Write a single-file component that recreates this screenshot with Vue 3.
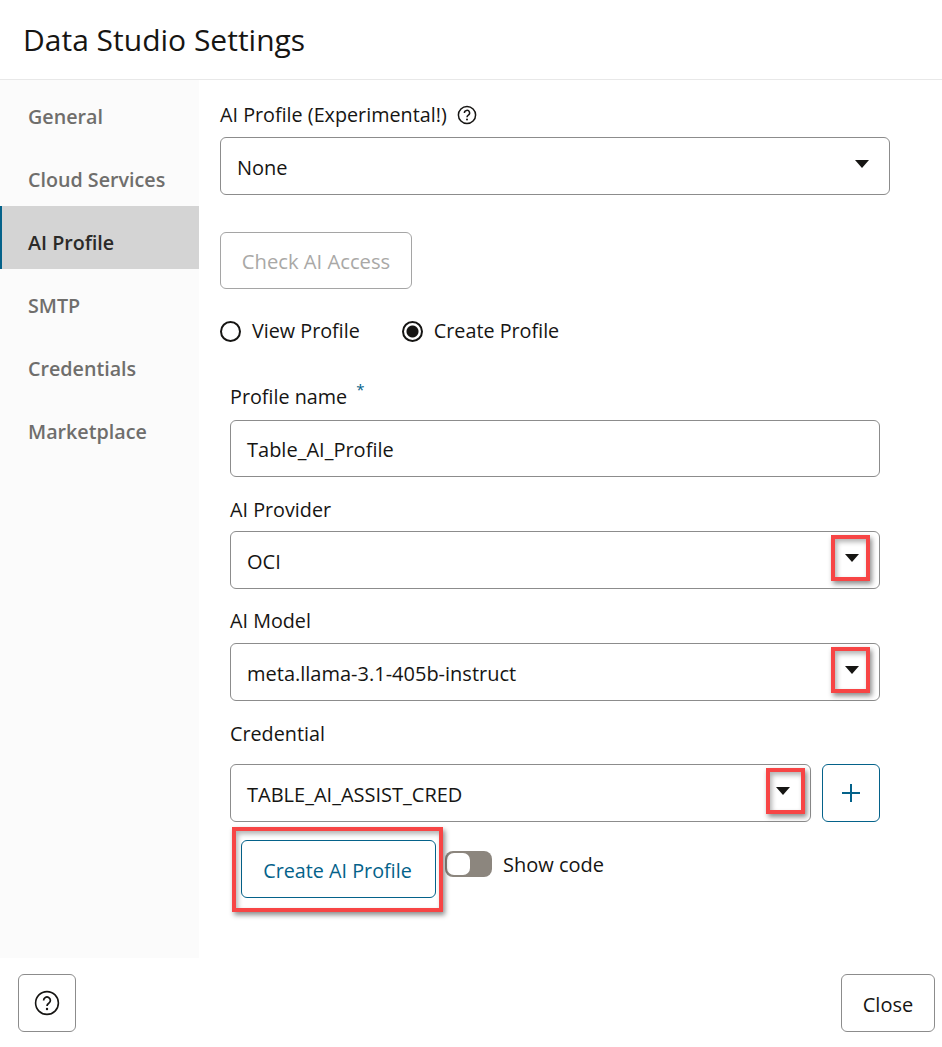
<template>
  <div class="dialog">
    <header class="dialog-header">
      <h1 class="dialog-title">Data Studio Settings</h1>
    </header>

    <div class="dialog-body">
      <nav class="side-nav">
        <div
          v-for="item in navItems"
          :key="item"
          class="nav-item"
          :class="{ active: item === 'AI Profile' }"
        >
          {{ item }}
        </div>
      </nav>

      <main class="content">
        <div class="label-row">
          <span class="field-label">AI Profile (Experimental!)</span>
          <svg class="help-small" width="20" height="20" viewBox="0 0 20 20">
            <circle cx="10" cy="10" r="8.6" fill="none" stroke="#161513" stroke-width="1.5" />
            <path d="M7.4 8a2.6 2.6 0 1 1 3.9 2.2c-.9.6-1.3 1-1.3 2" fill="none" stroke="#161513" stroke-width="1.5" />
            <circle cx="10" cy="14.6" r="1" fill="#161513" />
          </svg>
        </div>
        <div class="select wide">
          <span class="value">None</span>
          <span class="caret"></span>
        </div>

        <button class="btn check-btn" disabled>Check AI Access</button>

        <div class="radios">
          <label class="radio"><span class="radio-mark"></span>View Profile</label>
          <label class="radio"><span class="radio-mark on"></span>Create Profile</label>
        </div>

        <section class="form">
          <div class="field-label name-label">Profile name <sup class="req">*</sup></div>
          <div class="select name-input"><span class="value">Table_AI_Profile</span></div>

          <div class="field-label provider-label">AI Provider</div>
          <div class="select">
            <span class="value">OCI</span>
            <span class="caret"></span>
            <span class="mark mark-caret"></span>
          </div>

          <div class="field-label model-label">AI Model</div>
          <div class="select">
            <span class="value">meta.llama-3.1-405b-instruct</span>
            <span class="caret"></span>
            <span class="mark mark-caret"></span>
          </div>

          <div class="field-label cred-label">Credential</div>
          <div class="cred-row">
            <div class="select cred-select">
              <span class="value">TABLE_AI_ASSIST_CRED</span>
              <span class="caret"></span>
              <span class="mark mark-caret mark-cred"></span>
            </div>
            <button class="btn plus-btn" aria-label="Add">
              <svg width="18" height="18" viewBox="0 0 18 18">
                <path d="M9 0v18M0 9h18" stroke="#04628a" stroke-width="2" fill="none" />
              </svg>
            </button>
          </div>

          <div class="action-row">
            <button class="btn create-btn">
              <span class="create-text">Create AI Profile</span>
              <span class="mark mark-create"></span>
            </button>
            <span class="switch"><span class="knob"></span></span>
            <span class="switch-label">Show code</span>
          </div>
        </section>
      </main>
    </div>

    <footer class="dialog-footer">
      <button class="btn help-btn" aria-label="Help">
        <svg width="26" height="26" viewBox="0 0 26 26">
          <circle cx="13" cy="13" r="11.4" fill="none" stroke="#161513" stroke-width="1.6" />
          <path d="M9.6 10.4a3.4 3.4 0 1 1 5.2 2.9c-1.2.8-1.8 1.3-1.8 2.7" fill="none" stroke="#161513" stroke-width="1.7" />
          <circle cx="13" cy="19" r="1.2" fill="#161513" />
        </svg>
      </button>
      <button class="btn close-btn"><span class="value">Close</span></button>
    </footer>
  </div>
</template>

<script setup>
const navItems = ['General', 'Cloud Services', 'AI Profile', 'SMTP', 'Credentials', 'Marketplace']
</script>

<style>
html, body { background: #fff; }
</style>

<style scoped>
* { box-sizing: border-box; margin: 0; padding: 0; }

.dialog {
  width: 942px;
  height: 1047px;
  display: flex;
  flex-direction: column;
  background: #fff;
  color: #161513;
  font-family: "Open Sans", "Noto Sans", sans-serif;
  font-size: 19.75px;
  overflow: hidden;
}

.dialog-header {
  height: 80px;
  padding: 20px 0 0 23px;
  border-bottom: 1px solid #e8e8e8;
  flex-shrink: 0;
}

.dialog-title {
  font-size: 30px;
  font-weight: 400;
  line-height: 40px;
}

.dialog-body {
  display: flex;
  height: 878px;
  flex-shrink: 0;
}

.side-nav {
  width: 199px;
  background: #fbfbfb;
  flex-shrink: 0;
}

.nav-item {
  height: 63px;
  padding: 23px 0 0 28px;
  font-size: 19.7px;
  line-height: 28px;
  font-weight: 600;
  color: #6f6e6c;
}

.nav-item.active {
  background: #d4d4d4;
  color: #2b2a28;
  border-left: 2px solid #04628a;
  padding-left: 26px;
}

.content {
  flex: 1;
  padding: 21px 0 0 21px;
}

.label-row {
  display: flex;
  align-items: center;
  gap: 10px;
  height: 28px;
  margin-bottom: 8px;
}

.field-label {
  line-height: 28px;
}

.value {
  position: relative;
  top: 1px;
  font-size: 20px;
}

.select {
  position: relative;
  display: flex;
  align-items: center;
  justify-content: space-between;
  height: 58px;
  padding: 0 20px 0 16px;
  border: 1px solid #8c8c8c;
  border-radius: 6px;
  background: #fff;
}

.select.wide { width: 670px; }

.caret {
  width: 0;
  height: 0;
  border-left: 7.5px solid transparent;
  border-right: 7.5px solid transparent;
  border-top: 8px solid #161513;
  margin-top: -5px;
}

.btn {
  font-family: inherit;
  font-size: 19.75px;
  background: #fff;
  border: 1px solid #8c8c8c;
  border-radius: 6px;
  color: #161513;
}

.check-btn {
  display: block;
  width: 192px;
  height: 57px;
  margin-top: 37px;
  font-size: 20.2px;
  color: #a9a8a6;
  border-color: #a5a5a5;
}

.radios {
  display: flex;
  gap: 42px;
  margin-top: 27px;
  height: 30px;
  align-items: center;
}

.radio {
  display: flex;
  align-items: center;
  gap: 11px;
  line-height: 28px;
}

.radio-mark {
  display: block;
  width: 21px;
  height: 21px;
  border: 2px solid #161513;
  border-radius: 50%;
}

.radio-mark.on {
  background: radial-gradient(circle, #161513 0 5.5px, #fff 6.5px);
}

.form {
  width: 650px;
  margin-left: 10px;
}

.name-label { margin-top: 37px; margin-bottom: 9px; }

.req {
  color: #04628a;
  font-size: 15px;
  line-height: 0;
  vertical-align: 9px;
  margin-left: 4px;
}

.name-input { height: 57px; }

.provider-label { margin-top: 19px; margin-bottom: 7px; }
.model-label { margin-top: 18px; margin-bottom: 8px; }
.cred-label { margin-top: 19px; margin-bottom: 16px; }

.cred-row { display: flex; gap: 11px; }

.cred-select { width: 581px; }

.plus-btn {
  width: 58px;
  height: 58px;
  border-color: #04628a;
  display: flex;
  align-items: center;
  justify-content: center;
}

.action-row {
  display: flex;
  align-items: center;
  margin: 18px 0 0 11px;
  height: 58px;
}

.create-btn {
  position: relative;
  width: 195px;
  height: 58px;
  padding-top: 2px;
  padding-right: 2px;
  border-color: #04628a;
  color: #04628a;
}

.switch {
  display: block;
  width: 47px;
  height: 26px;
  margin: -11px 0 0 9px;
  background: #8c867e;
  border-radius: 8px;
  padding: 2px;
}

.knob {
  display: block;
  width: 23px;
  height: 22px;
  background: #fff;
  border-radius: 7px;
}

.switch-label {
  margin: -9px 0 0 11px;
  font-size: 20px;
  line-height: 28px;
}

/* red annotation frames over the screenshot */
.mark {
  position: absolute;
  border: 4px solid #f74545;
  box-shadow: 2px 3px 5px rgba(0, 0, 0, 0.45), inset 2px 3px 5px rgba(0, 0, 0, 0.3);
  pointer-events: none;
}

.mark-caret {
  right: 9px;
  top: 3px;
  width: 39px;
  height: 46px;
}

.mark-cred { right: 5px; }

.mark-create {
  left: -10px;
  top: -14px;
  width: 211px;
  height: 85px;
}

.dialog-footer {
  flex: 1;
  display: flex;
  justify-content: space-between;
  padding: 16px 7px 0 18px;
}

.help-btn, .close-btn {
  height: 58px;
  display: flex;
  align-items: center;
  justify-content: center;
}

.help-btn { width: 58px; }
.close-btn { width: 94px; }
</style>
